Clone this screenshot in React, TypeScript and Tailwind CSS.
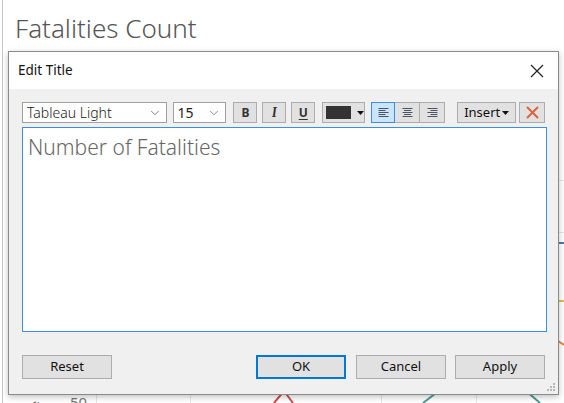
import { ChevronDown } from "lucide-react";

const ui = { fontFamily: '"Noto Sans", "Open Sans", sans-serif' };

function AlignIcon({ kind }: { kind: "left" | "center" | "right" }) {
	const widths = [10, 7, 10, 7, 10];
	return (
		<svg width="11" height="10" viewBox="0 0 11 10">
			{widths.map((w, i) => {
				const x = kind === "left" ? 0.5 : kind === "right" ? 10.5 - w : (11 - w) / 2;
				return (
					<line
						key={i}
						x1={x}
						x2={x + w}
						y1={i * 2 + 0.5}
						y2={i * 2 + 0.5}
						stroke="#4a5566"
						strokeWidth="1"
					/>
				);
			})}
		</svg>
	);
}

function ToolButton({
	children,
	className = "",
}: {
	children: React.ReactNode;
	className?: string;
}) {
	return (
		<div
			className={`flex h-[21px] items-center justify-center border border-[#adadad] bg-[#e1e1e1] ${className}`}
		>
			{children}
		</div>
	);
}

function DialogButton({
	label,
	primary = false,
}: {
	label: string;
	primary?: boolean;
}) {
	return (
		<div
			className={`flex h-[24px] w-[90px] items-center justify-center bg-[#e1e1e1] text-[13px] text-[#111] ${
				primary ? "border-2 border-[#0078d7]" : "border border-[#adadad]"
			}`}
		>
			{label}
		</div>
	);
}

function ChartBackdrop() {
	return (
		<svg
			className="absolute left-0 top-0"
			width="564"
			height="403"
			viewBox="0 0 564 403"
		>
			<line x1="2.5" y1="0" x2="2.5" y2="403" stroke="#c8c8c8" />
			<line x1="96.5" y1="388" x2="96.5" y2="403" stroke="#e6e6e6" />
			<line x1="190.5" y1="388" x2="190.5" y2="403" stroke="#e6e6e6" />
			<line x1="381.5" y1="388" x2="381.5" y2="403" stroke="#e6e6e6" />
			<line x1="476.5" y1="388" x2="476.5" y2="403" stroke="#e6e6e6" />
			<line x1="558" y1="180.5" x2="564" y2="180.5" stroke="#e6e6e6" />
			<line x1="558" y1="232.5" x2="564" y2="232.5" stroke="#e6e6e6" />
			<line x1="558" y1="243" x2="564" y2="243" stroke="#4e79a7" strokeWidth="2" />
			<line x1="558" y1="301" x2="564" y2="301" stroke="#e8b94a" strokeWidth="2" />
			<line x1="558" y1="341" x2="564" y2="345" stroke="#e8843b" strokeWidth="2" />
			<polyline
				points="274,403 284,391 293,403"
				fill="none"
				stroke="#d14b4b"
				strokeWidth="2"
			/>
			<line x1="423" y1="403" x2="440" y2="390" stroke="#4f9a94" strokeWidth="2" />
			<line x1="525" y1="390" x2="540" y2="403" stroke="#4f9a94" strokeWidth="2" />
		</svg>
	);
}

export default function App() {
	return (
		<div
			className="relative h-[403px] w-[564px] overflow-hidden bg-white"
			style={ui}
		>
			<ChartBackdrop />

			<div className="relative pl-[15px] pt-[8px] text-[26px] font-light leading-[40px] text-[#555]">
				Fatalities Count
			</div>

			{/* axis fragments peeking out under the dialog */}
			<div className="absolute bottom-[-4px] left-[27px] rotate-180 text-[11px] text-[#666] [writing-mode:vertical-rl]">
				e
			</div>
			<div className="absolute left-[70px] top-[392px] text-[15px] leading-[20px] text-[#777]">
				50
			</div>

			{/* Edit Title dialog */}
			<div className="absolute left-[8px] top-[51px] flex h-[344px] w-[551px] flex-col border border-[#8a8a8a] bg-[#f0f0f0] shadow-[0_2px_6px_rgba(0,0,0,0.25)]">
				<div className="flex h-[37px] shrink-0 items-center justify-between bg-white pl-[9px] pr-[14px]">
					<span className="text-[13.5px] text-[#111]">Edit Title</span>
					<svg width="14" height="14" viewBox="0 0 14 14">
						<path d="M1 1 L13 13 M13 1 L1 13" stroke="#222" strokeWidth="1.2" />
					</svg>
				</div>

				<div className="flex flex-1 flex-col px-[13px] pt-[13px]">
					<div className="flex h-[21px] items-center">
						<div className="flex h-[21px] w-[145px] items-center justify-between border border-[#a0a0a0] bg-white pl-[4px] pr-[4px] text-[14px] text-[#222]">
							<span className="font-light">Tableau Light</span>
							<ChevronDown size={14} strokeWidth={1.2} color="#555" />
						</div>
						<div className="ml-[6px] flex h-[21px] w-[54px] items-center justify-between border border-[#a0a0a0] bg-white pl-[4px] pr-[4px] text-[14px] text-[#222]">
							<span>15</span>
							<ChevronDown size={14} strokeWidth={1.2} color="#555" />
						</div>

						<ToolButton className="ml-[7px] w-[24px]">
							<span className="text-[12px] font-bold text-[#333]">B</span>
						</ToolButton>
						<ToolButton className="ml-[5px] w-[24px]">
							<span className="font-serif text-[13px] font-bold italic text-[#333]">I</span>
						</ToolButton>
						<ToolButton className="ml-[5px] w-[24px]">
							<span className="text-[12px] font-bold text-[#333] underline underline-offset-2">U</span>
						</ToolButton>

						<ToolButton className="ml-[7px] w-[43px] justify-start gap-[6px] pl-[3px]">
							<div className="h-[13px] w-[25px] bg-[#333]" />
							<svg width="7" height="4" viewBox="0 0 7 4">
								<path d="M0 0 H7 L3.5 4 Z" fill="#111" />
							</svg>
						</ToolButton>

						<div className="ml-[6px] flex h-[21px]">
							<div className="flex w-[24px] items-center justify-center border border-[#3c8ee0] bg-[#cce4f7]">
								<AlignIcon kind="left" />
							</div>
							<div className="flex w-[25px] items-center justify-center border-y border-r border-[#adadad] bg-[#e1e1e1]">
								<AlignIcon kind="center" />
							</div>
							<div className="flex w-[25px] items-center justify-center border-y border-r border-[#adadad] bg-[#e1e1e1]">
								<AlignIcon kind="right" />
							</div>
						</div>

						<ToolButton className="ml-[12px] w-[59px] gap-[2px]">
							<span className="text-[13px] text-[#111]">Insert</span>
							<svg width="7" height="4" viewBox="0 0 7 4">
								<path d="M0 0 H7 L3.5 4 Z" fill="#111" />
							</svg>
						</ToolButton>
						<ToolButton className="ml-[3px] w-[26px]">
							<svg width="13" height="13" viewBox="0 0 13 13">
								<path d="M1 1 L12 12 M12 1 L1 12" stroke="#d9633f" strokeWidth="2" />
							</svg>
						</ToolButton>
					</div>

					<div className="mt-[4px] h-[205px] w-[525px] border border-[#3d8ee8] bg-white px-[5px] pt-[5px]">
						<span className="text-[21px] font-light leading-[28px] text-[#666]">
							Number of Fatalities
						</span>
					</div>

					<div className="mt-[23px] flex items-center">
						<DialogButton label="Reset" />
						<div className="flex-1" />
						<DialogButton label="OK" primary />
						<div className="ml-[10px]">
							<DialogButton label="Cancel" />
						</div>
						<div className="ml-[9px]">
							<DialogButton label="Apply" />
						</div>
					</div>
				</div>

				<svg
					className="absolute bottom-[2px] right-[2px]"
					width="9"
					height="9"
					viewBox="0 0 9 9"
				>
					<rect x="6" y="0" width="2" height="2" fill="#b8b8b8" />
					<rect x="3" y="3" width="2" height="2" fill="#b8b8b8" />
					<rect x="6" y="3" width="2" height="2" fill="#b8b8b8" />
					<rect x="0" y="6" width="2" height="2" fill="#b8b8b8" />
					<rect x="3" y="6" width="2" height="2" fill="#b8b8b8" />
					<rect x="6" y="6" width="2" height="2" fill="#b8b8b8" />
				</svg>
			</div>
		</div>
	);
}
